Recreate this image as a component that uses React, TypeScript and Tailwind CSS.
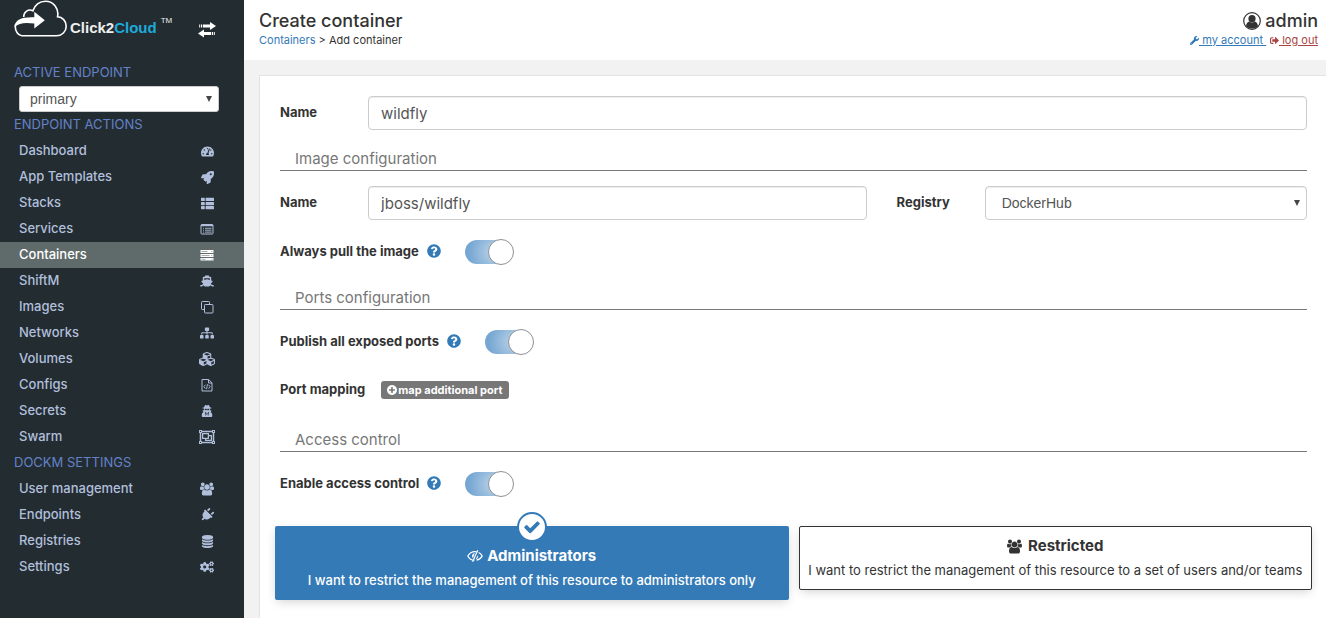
import React, { useState } from "react";
import {
  FaTachometerAlt,
  FaRocket,
  FaThList,
  FaShip,
  FaSitemap,
  FaCubes,
  FaUserSecret,
  FaRegObjectGroup,
  FaPlug,
  FaCogs,
  FaWrench,
  FaSignOutAlt,
  FaQuestionCircle,
} from "react-icons/fa";

type IconProps = { className?: string };

function ServerIcon({ className }: IconProps) {
  return (
    <svg viewBox="0 0 14 14" fill="currentColor" className={className} aria-hidden="true">
      <path d="M.5 2h13v3H.5zM.5 6h13v3H.5zM.5 10h13v2.500H.5z" />
      <path
        d="M1.500 3.500h6M1.500 7.500h8M1.500 11.300h4M11.200 3.500h1.200M11.200 7.500h1.200M11.200 11.300h1.200"
        stroke="#5f6b6a"
        strokeOpacity="0.6"
        strokeWidth="0.900"
      />
    </svg>
  );
}

function ListAltIcon({ className }: IconProps) {
  return (
    <svg viewBox="0 0 14 14" fill="none" stroke="currentColor" className={className} aria-hidden="true">
      <rect x="1" y="2.500" width="12" height="9.500" rx="0.800" />
      <path d="M1 3.500h12" strokeWidth="1.500" />
      <path d="M3 6.300h1M5 6.300h6.500M3 8.200h1M5 8.200h6.500M3 10.100h1M5 10.100h6.500" strokeWidth="0.900" />
    </svg>
  );
}

function CloneIcon({ className }: IconProps) {
  return (
    <svg viewBox="0 0 14 14" fill="none" stroke="currentColor" className={className} aria-hidden="true">
      <rect x="4.500" y="4.500" width="8.500" height="8.500" rx="0.800" />
      <path d="M4 9.500H2.300a.8.8 0 0 1-.8-.8V2.300a.8.8 0 0 1 .8-.8h6.400a.8.8 0 0 1 .8.8V4" />
    </svg>
  );
}

function FileCodeIcon({ className }: IconProps) {
  return (
    <svg viewBox="0 0 14 14" fill="none" stroke="currentColor" className={className} aria-hidden="true">
      <path d="M2 1.500h6.500L12 4.800V13H2zM8.500 1.500v3.500H12" />
      <path d="M5.500 6.700L3.900 8.700l1.600 2M8.500 6.700l1.600 2-1.600 2M7.500 6.200l-1 5" strokeWidth="0.900" />
    </svg>
  );
}

function EyeSlashIcon({ className }: IconProps) {
  return (
    <svg viewBox="0 0 16 14" fill="none" stroke="currentColor" className={className} aria-hidden="true">
      <path d="M7.300 11.400C4.600 11.200 2.300 9.600.8 7 2.400 4.200 5 2.600 8 2.600q.9 0 1.700.2M11.600 3.500C13.200 4.300 14.400 5.500 15.200 7 14 9.200 12 10.700 9.600 11.200" strokeWidth="1.300" />
      <path d="M10.800 1.200L5.600 12.800" strokeWidth="1.200" />
      <path d="M7.800 3.900A3.200 3.200 0 0 0 5.900 9.300zM11 6.300a3.200 3.200 0 0 1-2.400 3.900z" fill="currentColor" stroke="none" />
    </svg>
  );
}

function DatabaseIcon({ className }: IconProps) {
  return (
    <svg viewBox="0 0 1792 1792" fill="currentColor" className={className} aria-hidden="true">
      <path d="M896 768q237 0 443-43t325-127v170q0 69-103 128t-280 93.5-385 34.5-385-34.5-280-93.5-103-128v-170q119 84 325 127t443 43zm0 768q237 0 443-43t325-127v170q0 69-103 128t-280 93.5-385 34.5-385-34.5-280-93.5-103-128v-170q119 84 325 127t443 43zm0-384q237 0 443-43t325-127v170q0 69-103 128t-280 93.5-385 34.5-385-34.5-280-93.5-103-128v-170q119 84 325 127t443 43zm0-1152q208 0 385 34.5t280 93.5 103 128v128q0 69-103 128t-280 93.5-385 34.5-385-34.5-280-93.5-103-128v-128q0-69 103-128t280-93.5 385-34.5z" />
    </svg>
  );
}

function UsersIcon({ className }: IconProps) {
  return (
    <svg viewBox="0 0 1920 1792" fill="currentColor" className={className} aria-hidden="true">
      <path d="M593 896q-162 5-265 128h-134q-82 0-138-40.5t-56-118.5q0-353 124-353 6 0 43.5 21t97.5 42.5 119 21.5q67 0 133-23-5 37-5 66 0 139 81 256zm1071 637q0 120-73 189.5t-194 69.5h-874q-121 0-194-69.5t-73-189.5q0-53 3.5-103.5t14-109 26.5-108.5 43-97.5 62-81 85.5-53.5 111.5-20q10 0 43 21.5t73 48 107 48 135 21.5 135-21.5 107-48 73-48 43-21.5q61 0 111.5 20t85.5 53.5 62 81 43 97.5 26.5 108.5 14 109 3.5 103.5zm-1024-1277q0 106-75 181t-181 75-181-75-75-181 75-181 181-75 181 75 75 181zm704 384q0 159-112.5 271.5t-271.5 112.5-271.5-112.5-112.5-271.5 112.5-271.5 271.5-112.5 271.5 112.5 112.5 271.5zm576 225q0 78-56 118.5t-138 40.5h-134q-103-123-265-128 81-117 81-256 0-29-5-66 66 23 133 23 59 0 119-21.5t97.5-42.5 43.5-21q124 0 124 353zm-128-609q0 106-75 181t-181 75-181-75-75-181 75-181 181-75 181 75 75 181z" />
    </svg>
  );
}

function CheckIcon({ className }: IconProps) {
  return (
    <svg viewBox="0 0 1792 1792" fill="currentColor" className={className} aria-hidden="true">
      <path d="M1671 566q0 40-28 68l-724 724-136 136q-28 28-68 28t-68-28l-136-136-362-362q-28-28-28-68t28-68l136-136q28-28 68-28t68 28l294 295 656-657q28-28 68-28t68 28l136 136q28 28 28 68z" />
    </svg>
  );
}

function PlusCircleIcon({ className }: IconProps) {
  return (
    <svg viewBox="128 128 1536 1536" fill="currentColor" className={className} aria-hidden="true">
      <path d="M1344 960v-128q0-26-19-45t-45-19h-256v-256q0-26-19-45t-45-19h-128q-26 0-45 19t-19 45v256h-256q-26 0-45 19t-19 45v128q0 26 19 45t45 19h256v256q0 26 19 45t45 19h128q26 0 45-19t19-45v-256h256q26 0 45-19t19-45zm320-64q0 209-103 385.5t-279.5 279.5-385.5 103-385.5-103-279.5-279.5-103-385.5 103-385.5 279.5-279.5 385.5-103 385.5 103 279.5 279.5 103 385.5z" />
    </svg>
  );
}

function TransferIcon({ className }: IconProps) {
  return (
    <svg viewBox="0 0 18 16" fill="currentColor" className={className} aria-hidden="true">
      <path d="M5 2.5h7V0l6 4-6 4V5.5H5zM1.2 2.5h1v3h-1zM3 2.5h1.2v3H3zM13 10H6V7.5L0 11.5l6 4V13h7zM13.8 10H15v3h-1.2zM15.8 10h1v3h-1z" />
    </svg>
  );
}

function UserCircleIcon({ className }: IconProps) {
  return (
    <svg viewBox="0 0 18 18" className={className} aria-hidden="true">
      <circle cx="9" cy="9" r="8.3" fill="none" stroke="currentColor" strokeWidth="1.2" />
      <circle cx="9" cy="6.7" r="3.6" fill="currentColor" />
      <path d="M3 14.2c.3-2.700 1.500-4.300 3.300-4.600 1.600 1.300 3.800 1.300 5.400 0 1.800.3 3 1.900 3.300 4.600-3.200 3.200-8.800 3.200-12 0z" fill="currentColor" />
    </svg>
  );
}

function CloudLogo({ className }: IconProps) {
  return (
    <svg viewBox="0 0 54 38" className={className} aria-hidden="true">
      <path
        d="M1.500 25C.5 31 4 35.800 10 35.800H42.500C48 35.800 52.200 31.500 52.200 26.200 52.200 21 48.500 17 43.500 16.800 45.300 8.500 39.500 1.200 31.500 1.200 25.500 1.200 20.500 5 18.900 10.800 14.500 8.600 9.600 11.800 9.700 17"
        fill="none"
        stroke="#fff"
        strokeWidth="1.600"
      />
      <path d="M.6 25C2.500 19.500 8 16.800 20.300 17.300V11.800L30.800 20.300 20.300 28.500V23.500C11 22.300 5 22.800.6 27z" fill="#fff" />
    </svg>
  );
}

type NavItem = { label: string; icon: React.ComponentType<IconProps>; iconClass?: string; active?: boolean };

const endpointActions: NavItem[] = [
  { label: "Dashboard", icon: FaTachometerAlt, iconClass: "size-[13px]" },
  { label: "App Templates", icon: FaRocket, iconClass: "size-[13px]" },
  { label: "Stacks", icon: FaThList, iconClass: "size-[13px]" },
  { label: "Services", icon: ListAltIcon },
  { label: "Containers", icon: ServerIcon, active: true },
  { label: "ShiftM", icon: FaShip },
  { label: "Images", icon: CloneIcon },
  { label: "Networks", icon: FaSitemap },
  { label: "Volumes", icon: FaCubes, iconClass: "size-4" },
  { label: "Configs", icon: FileCodeIcon },
  { label: "Secrets", icon: FaUserSecret, iconClass: "size-3" },
  { label: "Swarm", icon: FaRegObjectGroup, iconClass: "size-4" },
];

const settings: NavItem[] = [
  { label: "User management", icon: UsersIcon },
  { label: "Endpoints", icon: FaPlug, iconClass: "size-3.5 rotate-45" },
  { label: "Registries", icon: DatabaseIcon, iconClass: "size-[13px]" },
  { label: "Settings", icon: FaCogs },
];

function NavHeading({ children }: { children: React.ReactNode }) {
  return <h2 className="h-[26px] pl-3.5 text-[13px] leading-6 text-[#6382c8]">{children}</h2>;
}

function NavList({ items }: { items: NavItem[] }) {
  return (
    <ul>
      {items.map(({ label, icon: Icon, iconClass, active }) => (
        <li key={label}>
          <a
            href="#"
            className={`flex h-[26px] items-center justify-between pr-[27px] pl-[19px] text-[13px] font-medium ${
              active ? "bg-[#5f6b6a] text-white" : "text-[#b2bfdc]"
            }`}
          >
            {label}
            <span className="flex w-5 justify-center">
              <Icon className={iconClass ?? "size-3.5"} />
            </span>
          </a>
        </li>
      ))}
    </ul>
  );
}

function Caret() {
  return (
    <svg viewBox="0 0 6 6" className="pointer-events-none h-1.5 w-1.5 self-center justify-self-end [grid-area:1/1] mr-[7px]" fill="#444" aria-hidden="true">
      <path d="M0 0h6L3 6z" />
    </svg>
  );
}

const selectText = "font-['Liberation_Sans',Arial,sans-serif] text-sm text-[#555]";
const fieldBox = "h-[34px] w-full rounded border border-[#ccc] bg-white shadow-[inset_0_1px_1px_rgba(0,0,0,0.075)]";

function SectionTitle({ children, className }: { children: React.ReactNode; className: string }) {
  return (
    <h2 className={`h-[22px] border-b border-[#777] pl-[15px] text-[15px] leading-5 text-[#777] ${className}`}>
      {children}
    </h2>
  );
}

function ToggleRow({ id, label, className }: { id: string; label: string; className: string }) {
  const [on, setOn] = useState(true);
  return (
    <div className={`flex h-6 items-center ${className}`}>
      <label htmlFor={id} className="font-bold">
        {label}
      </label>
      <FaQuestionCircle className="mb-0.5 ml-2 size-3.5 text-[#337ab7]" />
      <input
        id={id}
        type="checkbox"
        checked={on}
        onChange={(e) => setOn(e.target.checked)}
        className="relative ml-6 h-6 w-12 appearance-none rounded-full bg-[#ddd] before:absolute before:-top-px before:-left-px before:size-[26px] before:rounded-full before:border before:border-[#8d9196] before:bg-white checked:bg-[radial-gradient(circle_at_60%_50%,#bdd3e8_0%,#76a7d3_80%)] checked:before:-right-px checked:before:left-auto"
      />
    </div>
  );
}

export default function App() {
  return (
    <div className="flex min-h-screen bg-[#f2f2f2] font-['Inter','Liberation_Sans',sans-serif] text-[13px] text-[#333]">
      <aside className="w-[244px] shrink-0 bg-[#232d31]">
        <div className="flex h-[60px] items-start pl-3.5">
          <CloudLogo className="h-[38px] w-[54px]" />
          <div className="mt-[18px] ml-0.5 flex font-['Liberation_Sans',Arial,sans-serif] text-[15px] leading-5 font-bold text-[#eee]">
            Click2<span className="text-[#1fa9dc]">Cloud</span>
            <span className="ml-1 text-[8px] leading-[6px] font-normal">TM</span>
          </div>
          <button type="button" aria-label="Toggle sidebar" className="mt-[22px] mr-7 ml-auto text-white">
            <TransferIcon className="h-4 w-[18px]" />
          </button>
        </div>
        <nav>
          <NavHeading>
            <label htmlFor="endpoint">ACTIVE ENDPOINT</label>
          </NavHeading>
          <div className="mr-[25px] ml-[19px] grid">
            <select
              id="endpoint"
              className={`h-[26px] w-full appearance-none rounded-[3px] border border-[#ccc] bg-white pl-2.5 [grid-area:1/1] ${selectText}`}
            >
              <option>primary</option>
            </select>
            <Caret />
          </div>
          <NavHeading>ENDPOINT ACTIONS</NavHeading>
          <NavList items={endpointActions} />
          <NavHeading>DOCKM SETTINGS</NavHeading>
          <NavList items={settings} />
        </nav>
      </aside>

      <div className="flex min-w-0 flex-1 flex-col">
        <header className="flex h-[60px] justify-between bg-white pt-2.5 pr-2 pl-[15px]">
          <div>
            <h1 className="text-lg leading-[22px] font-medium">Create container</h1>
            <div className="text-[11px] leading-4">
              <a href="#" className="text-[#337ab7]">
                Containers
              </a>{" "}
              &gt; Add container
            </div>
          </div>
          <div className="flex flex-col items-end">
            <div className="flex items-center gap-1 text-lg leading-[22px] font-medium">
              <UserCircleIcon className="size-[18px]" />
              admin
            </div>
            <div className="flex gap-1 text-[11px] leading-4 underline">
              <a href="#" className="flex items-center text-[#337ab7]">
                <FaWrench className="size-[9px]" />
                <span className="whitespace-pre"> my account </span>
              </a>
              <a href="#" className="flex items-center text-[#a94442]">
                <FaSignOutAlt className="size-[9px]" />
                <span className="whitespace-pre"> log out</span>
              </a>
            </div>
          </div>
        </header>

        <main className="flex flex-1 flex-col pt-[15px] pl-[15px]">
          <form className="flex-1 border-t border-l border-[#e4e4e4] bg-white pt-5 pr-[19px] pb-4 pl-5">
            <div className="-mx-[15px] grid grid-cols-12">
              <label htmlFor="name" className="px-[15px] pt-[7px] font-bold">
                Name
              </label>
              <div className="col-span-11 px-[15px]">
                <input id="name" type="text" defaultValue="wildfly" className={`${fieldBox} px-3 text-[15px] text-[#555]`} />
              </div>
            </div>

            <SectionTitle className="mt-[19px] mb-[15px]">Image configuration</SectionTitle>
            <div className="-mx-[15px] grid grid-cols-12">
              <label htmlFor="image" className="px-[15px] pt-[7px] font-bold">
                Name
              </label>
              <div className="col-span-6 px-[15px]">
                <input id="image" type="text" defaultValue="jboss/wildfly" className={`${fieldBox} px-3 text-[15px] text-[#555]`} />
              </div>
              <label htmlFor="registry" className="px-[15px] pt-[7px] font-bold">
                Registry
              </label>
              <div className="col-span-4 grid px-[15px]">
                <select id="registry" className={`${fieldBox} appearance-none pl-4 [grid-area:1/1] ${selectText}`}>
                  <option>DockerHub</option>
                </select>
                <Caret />
              </div>
            </div>
            <ToggleRow id="pull" label="Always pull the image" className="mt-5" />

            <SectionTitle className="mt-6">Ports configuration</SectionTitle>
            <ToggleRow id="publish" label="Publish all exposed ports" className="mt-5" />
            <div className="mt-[26px] flex h-5 items-center gap-4">
              <span className="font-bold">Port mapping</span>
              <button
                type="button"
                className="flex h-[18px] items-center gap-px rounded-[3px] bg-[#777] px-1.5 text-[11px] font-bold text-white"
              >
                <PlusCircleIcon className="size-2.5" />
                map additional port
              </button>
            </div>

            <SectionTitle className="mt-[30px]">Access control</SectionTitle>
            <ToggleRow id="access" label="Enable access control" className="mt-5" />

            <fieldset className="mt-[30px] -mr-[5px] -ml-[5px] grid grid-cols-2 items-start gap-2.5">
              <label className="relative rounded-[2px] bg-[#337ab7] px-2.5 pt-5 pb-2.5 text-center text-white shadow-[0_3px_10px_-2px_rgba(0,0,0,0.2)]">
                <input type="radio" name="ownership" defaultChecked className="sr-only" />
                <span className="absolute -top-3.5 left-1/2 flex size-[30px] -translate-x-1/2 items-center justify-center rounded-full border-2 border-[#337ab7] bg-white text-[#337ab7]">
                  <CheckIcon className="size-[18px]" />
                </span>
                <span className="flex items-center justify-center gap-1 text-[15px] leading-5 font-bold">
                  <EyeSlashIcon className="h-3.5 w-4" />
                  Administrators
                </span>
                <span className="mt-1 block leading-5 font-medium">
                  I want to restrict the management of this resource to administrators only
                </span>
              </label>
              <label className="rounded-[2px] border border-[#333] px-1 py-[9px] text-center shadow-[0_3px_10px_-2px_rgba(0,0,0,0.2)]">
                <input type="radio" name="ownership" className="sr-only" />
                <span className="flex items-center justify-center gap-1.5 text-[15px] leading-5 font-bold">
                  <UsersIcon className="size-[15px]" />
                  Restricted
                </span>
                <span className="mt-1 block leading-5">
                  I want to restrict the management of this resource to a set of users and/or teams
                </span>
              </label>
            </fieldset>
          </form>
        </main>
      </div>
    </div>
  );
}
